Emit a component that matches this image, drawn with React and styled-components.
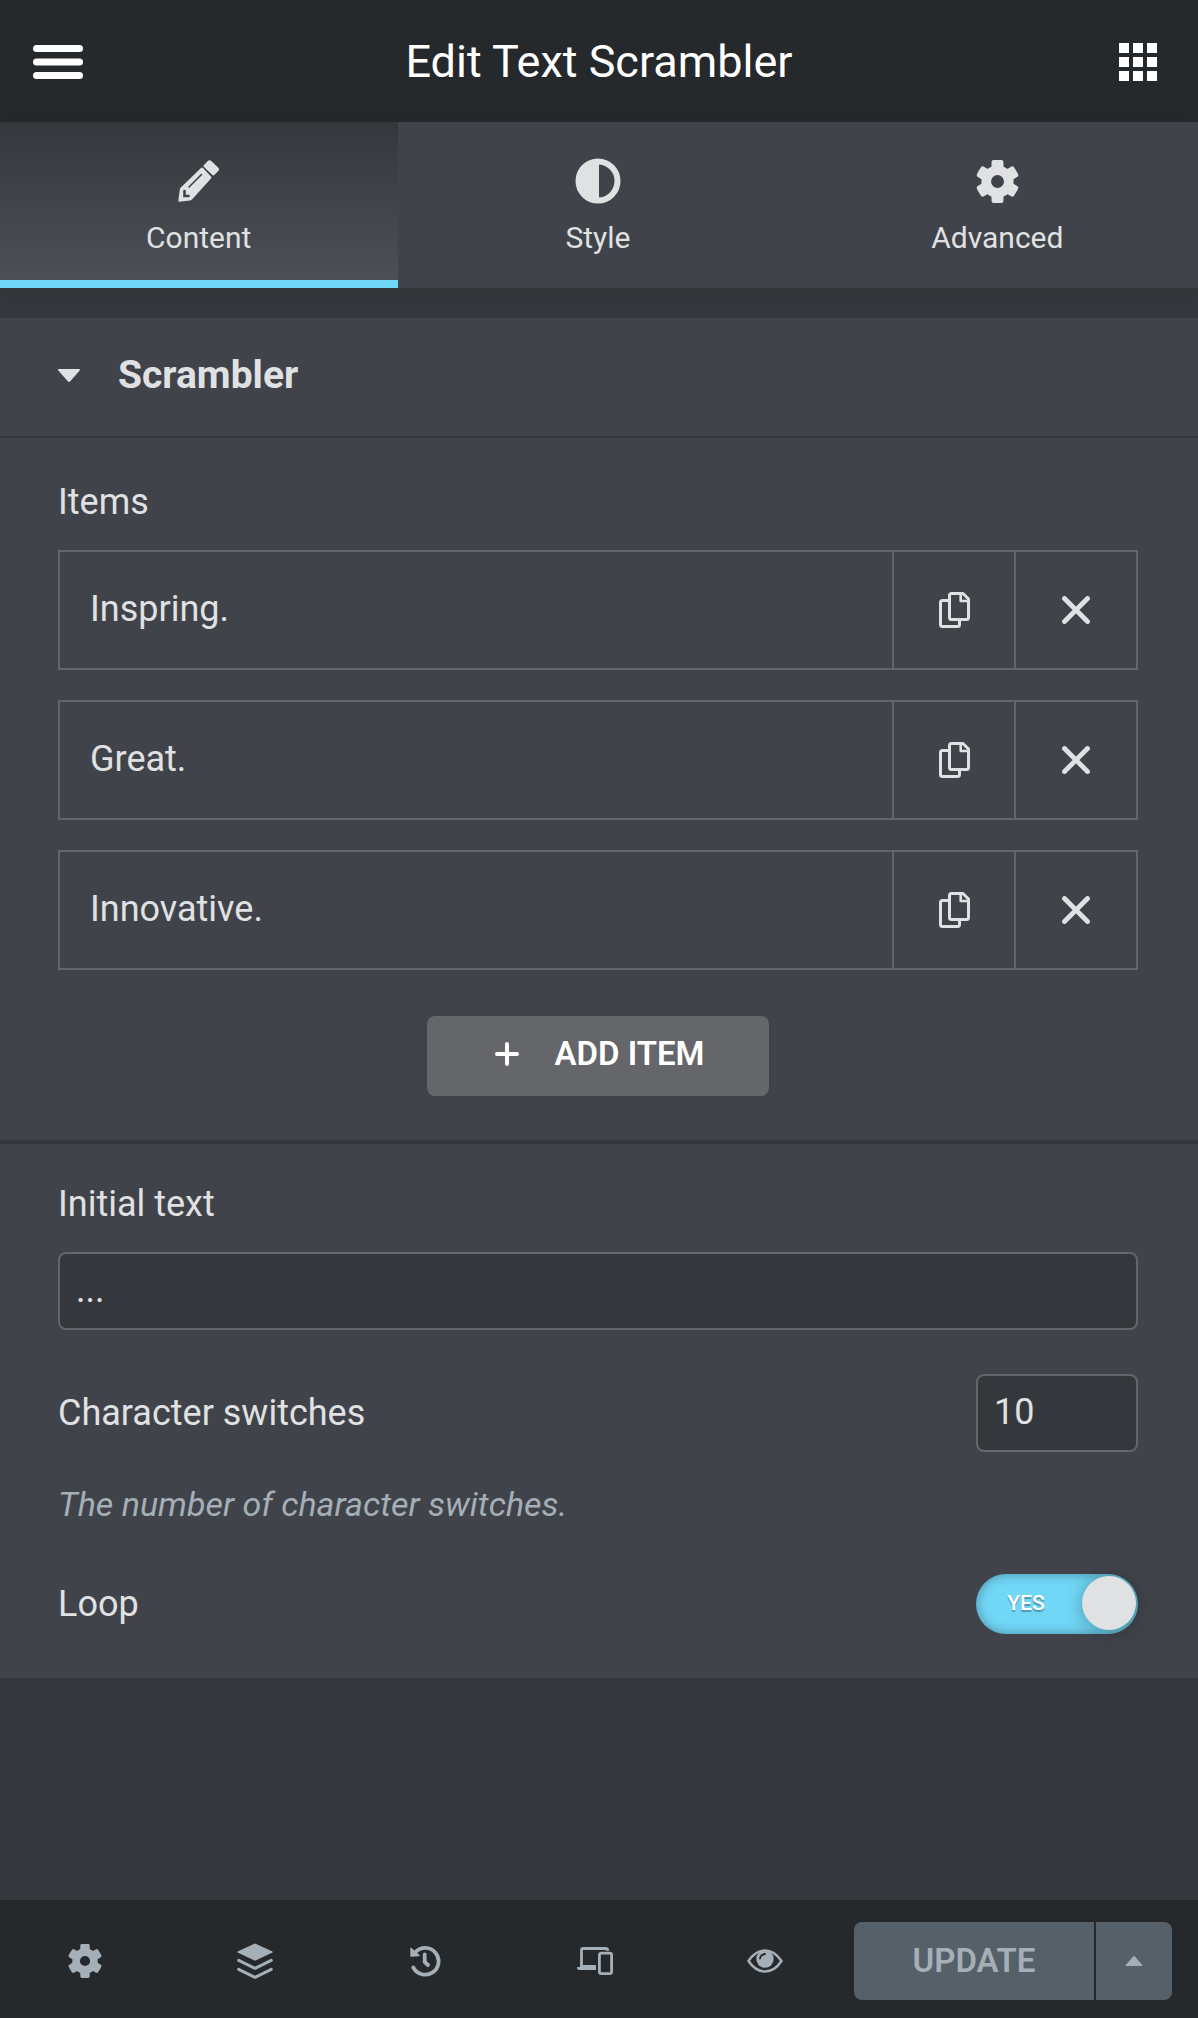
import React, { useState } from "react";
import styled, { createGlobalStyle, css } from "styled-components";

const color = {
  bar: "#26292c",
  panel: "#404349",
  page: "#34383c",
  line: "#64666a",
  text: "#e0e1e3",
  muted: "#a4afb7",
  accent: "#71d7f7",
  update: "#556068",
};

const GlobalStyle = createGlobalStyle`
  *, *::before, *::after { box-sizing: border-box; }
  body {
    margin: 0;
    background: ${color.page};
    color: ${color.text};
    font-family: Roboto, "Liberation Sans", sans-serif;
    font-size: 36px;
    line-height: 42px;
  }
  svg { display: block; flex: none; }
`;

const resetButton = css`
  margin: 0;
  padding: 0;
  border: 0;
  background: none;
  color: inherit;
  font: inherit;
  cursor: pointer;
  display: flex;
  align-items: center;
  justify-content: center;
`;

const Panel = styled.div`
  display: flex;
  flex-direction: column;
  min-height: 100vh;
`;

const Header = styled.header`
  display: grid;
  grid-template-columns: 1fr auto 1fr;
  align-items: center;
  height: 122px;
  padding: 2px 0 0;
  background: ${color.bar};
  color: #fff;
`;

const Title = styled.h1`
  margin: 0;
  font-size: 45px;
  line-height: 54px;
  font-weight: 400;
`;

const HeaderButton = styled.button`
  ${resetButton}
  justify-self: ${(p) => (p.$end ? "end" : "start")};
  padding: ${(p) => (p.$end ? "0 41px" : "0 33px")};
`;

const Tabs = styled.nav`
  display: grid;
  grid-template-columns: repeat(3, 1fr);
  height: 166px;
  background: ${color.panel};
  box-shadow: 0 2px 16px rgba(0, 0, 0, 0.1);
`;

const Tab = styled.button`
  ${resetButton}
  flex-direction: column;
  justify-content: flex-start;
  gap: 16px;
  margin-right: 1px;
  padding: 36px 1px 0 0;
  font-size: 30px;
  line-height: 36px;
  border-bottom: 8px solid transparent;
  ${(p) =>
    p.$active &&
    css`
      background: linear-gradient(${color.page}, #4d4f57) padding-box;
      border-bottom-color: ${color.accent};
    `}
`;

const TabIcon = styled.span`
  display: flex;
  align-items: center;
  justify-content: center;
  height: 46px;
`;

const Section = styled.section`
  margin-top: 30px;
  background: ${color.panel};
`;

const SectionToggle = styled.button`
  ${resetButton}
  justify-content: flex-start;
  gap: 38px;
  width: 100%;
  height: 120px;
  padding: 0 58px 4px;
  border-bottom: 2px solid ${color.page};
  font-size: 39px;
  font-weight: 700;
`;

const Group = styled.div`
  display: flex;
  flex-direction: column;
  padding: 43px 60px 44px 58px;

  & + & {
    padding-top: 39px;
    border-top: 4px solid ${color.page};
  }
`;

const Label = styled.label`
  font-size: 36px;
`;

const StackedLabel = styled(Label)`
  margin-bottom: 27px;
`;

const ItemList = styled.ul`
  display: flex;
  flex-direction: column;
  gap: 30px;
  margin: 0 0 46px;
  padding: 0;
  list-style: none;
`;

const Item = styled.li`
  display: flex;
  height: 120px;
  border: 2px solid ${color.line};
`;

const ItemTitle = styled.button`
  ${resetButton}
  flex: 1;
  justify-content: flex-start;
  padding: 0 30px 2px;
`;

const ItemTool = styled.button`
  ${resetButton}
  width: 122px;
  border-left: 2px solid ${color.line};
`;

const AddButton = styled.button`
  ${resetButton}
  align-self: center;
  gap: 35px;
  height: 80px;
  padding: 0 64px 4px 68px;
  border-radius: 8px;
  background: ${color.line};
  color: #fff;
  font-size: 33px;
  font-weight: 600;
  text-transform: uppercase;
`;

const Field = styled.input`
  width: ${(p) => (p.$small ? "162px" : "100%")};
  height: 78px;
  margin: 0;
  padding: 0 16px 2px;
  border: 2px solid ${color.line};
  border-radius: 8px;
  outline: 0;
  background: ${color.page};
  color: ${color.text};
  font: inherit;
  appearance: textfield;

  &::-webkit-inner-spin-button {
    appearance: none;
    margin: 0;
  }
`;

const Row = styled.div`
  display: flex;
  align-items: center;
  justify-content: space-between;
  margin-top: ${(p) => p.$gap}px;
`;

const Description = styled.p`
  margin: 32px 0 0;
  color: ${color.muted};
  font-size: 34px;
  line-height: 40px;
  font-style: italic;
`;

const Switch = styled.span`
  position: relative;
  display: flex;
  align-items: center;
  justify-content: ${(p) => (p.$on ? "flex-end" : "flex-start")};
  width: 162px;
  height: 60px;
  padding: 0 2px 2px;
  border-radius: 30px;
  background: ${(p) => (p.$on ? color.accent : color.line)};
  box-shadow: inset 0 0 12px rgba(0, 0, 0, 0.35);
`;

const SwitchInput = styled.input`
  position: absolute;
  inset: 0;
  width: 100%;
  height: 100%;
  margin: 0;
  opacity: 0;
  cursor: pointer;
`;

const SwitchText = styled.span`
  flex: 1;
  padding-right: 8px;
  text-align: center;
  color: #fff;
  font-size: 21px;
  line-height: 26px;
  font-weight: 500;
  text-transform: uppercase;
  text-shadow: 0 2px 1px rgba(0, 0, 0, 0.3);
`;

const Knob = styled.span`
  width: 54px;
  height: 54px;
  border-radius: 50%;
  background: ${color.text};
  box-shadow: 0 2px 18px rgba(0, 0, 0, 0.3);
`;

const Footer = styled.footer`
  display: flex;
  align-items: center;
  height: 118px;
  margin-top: auto;
  padding: 4px 26px 0 0;
  background: ${color.bar};
  color: ${color.muted};
`;

const FooterTools = styled.div`
  flex: 1;
  display: grid;
  grid-template-columns: repeat(5, 1fr);
  padding-right: 4px;
`;

const FooterButton = styled.button`
  ${resetButton}
  height: 78px;
`;

const Publish = styled.div`
  display: flex;
  gap: 2px;
  height: 78px;
  border-radius: 8px;
  overflow: hidden;
`;

const PublishButton = styled.button`
  ${resetButton}
  width: ${(p) => (p.$menu ? "76px" : "240px")};
  background: ${color.update};
  font-size: 33px;
  font-weight: 600;
  text-transform: uppercase;
`;

const MenuIcon = () => (
  <svg width="50" height="34" viewBox="0 0 50 34" fill="currentColor">
    <rect width="50" height="7" rx="3.5" />
    <rect y="13.5" width="50" height="7" rx="3.5" />
    <rect y="27" width="50" height="7" rx="3.5" />
  </svg>
);

const AppsIcon = () => (
  <svg width="38" height="38" viewBox="0 0 38 38" fill="currentColor">
    {[0, 14, 28].map((y) =>
      [0, 14, 28].map((x) => <rect key={`${x}-${y}`} x={x} y={y} width="10" height="10" />)
    )}
  </svg>
);

const PencilIcon = () => (
  <svg width="42" height="42" viewBox="0 0 42 42">
    <mask id="pencil-cut">
      <rect width="42" height="42" fill="#fff" />
      <path d="M23.5 14.5L11 27" stroke="#000" strokeWidth="1.6" strokeLinecap="round" />
      <path d="M6.500 31V36H10.500" stroke="#000" strokeWidth="2.600" fill="none" strokeLinecap="round" />
    </mask>
    <path
      mask="url(#pencil-cut)"
      fill="currentColor"
      d="M23 8Q24 7 25 8L33 16.500Q34 17.500 33 18.500L14 39.500Q13 40.500 12 40.600L1.500 41.800Q0.200 41.800 0.300 40.500L1.800 29.500Q1.900 28.500 2.800 27.600Z"
    />
    <path fill="currentColor" d="M26 5L29.800 1Q31.500 -0.500 33.300 1L40.300 7.700Q41.800 9.300 40.300 11L36.300 15Q35.300 15.900 34.300 15L26 7Q25 6 26 5Z" />
  </svg>
);

const ContrastIcon = () => (
  <svg width="46" height="46" viewBox="0 0 46 46">
    <circle cx="23" cy="23" r="19.500" fill="none" stroke="currentColor" strokeWidth="6" />
    <path d="M24 4A19 19 0 0 0 24 42Z" fill="currentColor" />
  </svg>
);

const GearIcon = ({ size }) => (
  <svg width={size} height={size} viewBox="0 0 24 24" fill="currentColor">
    <circle cx="12" cy="12" r="6.300" fill="none" stroke="currentColor" strokeWidth="5.400" />
    {[0, 60, 120, 180, 240, 300].map((a) => (
      <path key={a} transform={`rotate(${a} 12 12)`} d="M8.600 5.500L8.700 1Q8.800 0.100 9.700 0.050Q12 -0.150 14.300 0.050Q15.200 0.100 15.300 1L15.400 5.500Z" />
    ))}
  </svg>
);

const CaretIcon = ({ width, up }) => (
  <svg width={width} height={Math.round(width * 0.58)} viewBox="0 0 22 13" fill="currentColor">
    <path transform={up ? "rotate(180 11 6.500)" : undefined} d="M1 0H21Q22.500 0.300 21.500 1.700L12.200 12.300Q11 13.500 9.800 12.300L0.500 1.700Q-0.500 0.300 1 0Z" />
  </svg>
);

const CopyIcon = () => (
  <svg width="31" height="36" viewBox="0 0 31 36" fill="none" stroke="currentColor" strokeWidth="3" strokeLinejoin="round">
    <path d="M10.500 3.500Q10.500 1.500 12.500 1.500H24L29.500 7V25.500Q29.500 27.500 27.500 27.500H12.500Q10.500 27.500 10.500 25.500Z" />
    <path d="M21.700 1.500V9H29.500" strokeWidth="2.600" />
    <path d="M10.500 8.500H3.500Q1.500 8.500 1.500 10.500V32.500Q1.500 34.500 3.500 34.500H18.500Q20.500 34.500 20.500 32.500V28" />
  </svg>
);

const CloseIcon = () => (
  <svg width="28" height="28" viewBox="0 0 28 28" stroke="currentColor" strokeWidth="4.800" strokeLinecap="round">
    <path d="M2.500 2.500L25.500 25.500M25.500 2.500L2.500 25.500" />
  </svg>
);

const PlusIcon = () => (
  <svg width="24" height="24" viewBox="0 0 24 24" stroke="currentColor" strokeWidth="4" strokeLinecap="round">
    <path d="M12 2V22M2 12H22" />
  </svg>
);

const LayersIcon = () => (
  <svg width="36" height="36" viewBox="0 0 36 36" fill="none" stroke="currentColor" strokeWidth="3" strokeLinecap="round" strokeLinejoin="round">
    <path d="M18 0.500L35 8.200Q36.500 9 35 9.800L18 17.700L1 9.800Q-0.500 9 1 8.200Z" fill="currentColor" stroke="none" />
    <path d="M1.700 17.300L18 25.300L34.300 17.300" />
    <path d="M1.700 26.300L18 34.300L34.300 26.300" />
  </svg>
);

const HistoryIcon = () => (
  <svg width="31" height="32" viewBox="0 0 31 32" fill="none" stroke="currentColor" strokeWidth="3.800" strokeLinecap="round">
    <path d="M3.300 22.500A13.400 13.400 0 1 0 5.500 7" />
    <path d="M0.300 3Q0.800 2.200 1.500 3L9.500 10Q10.200 11 9 11.300L1 11.700Q0.300 11.700 0.300 11Z" fill="currentColor" stroke="none" />
    <path d="M14.700 9.500V17L18 20" strokeLinejoin="round" />
  </svg>
);

const DevicesIcon = () => (
  <svg width="36" height="28" viewBox="0 0 36 28" fill="none" stroke="currentColor" strokeWidth="2.800">
    <path d="M4.500 19V3Q4.500 1.500 6 1.500H28.500Q30.500 1.500 31 3.700" />
    <path d="M3 18H19V23H2Q0 23 0 20H3Z" fill="currentColor" stroke="none" />
    <rect x="22.400" y="6.200" width="12.200" height="20.400" rx="1.800" />
  </svg>
);

const EyeIcon = () => (
  <svg width="36" height="24" viewBox="0 0 36 24">
    <path d="M1.500 12Q8.500 1.500 18 1.500T34.500 12Q27.500 22.500 18 22.500T1.500 12Z" fill="none" stroke="currentColor" strokeWidth="2.600" strokeLinejoin="round" />
    <circle cx="18" cy="10" r="8.700" fill="currentColor" />
    <path d="M13 9.500Q13.500 5.500 18 5" fill="none" stroke={color.bar} strokeWidth="1.800" strokeLinecap="round" />
  </svg>
);

const tabs = [
  { name: "Content", icon: <PencilIcon /> },
  { name: "Style", icon: <ContrastIcon /> },
  { name: "Advanced", icon: <GearIcon size={43} /> },
];

const footerTools = [
  { name: "Settings", icon: <GearIcon size={34} /> },
  { name: "Navigator", icon: <LayersIcon /> },
  { name: "History", icon: <HistoryIcon /> },
  { name: "Responsive Mode", icon: <DevicesIcon /> },
  { name: "Preview Changes", icon: <EyeIcon /> },
];

const items = ["Inspring.", "Great.", "Innovative."];

export default function App() {
  const [active, setActive] = useState("Content");
  const [loop, setLoop] = useState(true);

  return (
    <Panel>
      <GlobalStyle />
      <Header>
        <HeaderButton aria-label="Menu"><MenuIcon /></HeaderButton>
        <Title>Edit Text Scrambler</Title>
        <HeaderButton $end aria-label="Widgets"><AppsIcon /></HeaderButton>
      </Header>
      <Tabs>
        {tabs.map((tab) => (
          <Tab key={tab.name} $active={tab.name === active} onClick={() => setActive(tab.name)}>
            <TabIcon>{tab.icon}</TabIcon>
            {tab.name}
          </Tab>
        ))}
      </Tabs>
      <Section>
        <SectionToggle aria-expanded="true">
          <CaretIcon width={22} />
          Scrambler
        </SectionToggle>
        <Group>
          <StackedLabel as="span" id="items-label">Items</StackedLabel>
          <ItemList aria-labelledby="items-label">
            {items.map((item) => (
              <Item key={item}>
                <ItemTitle>{item}</ItemTitle>
                <ItemTool aria-label="Duplicate"><CopyIcon /></ItemTool>
                <ItemTool aria-label="Remove"><CloseIcon /></ItemTool>
              </Item>
            ))}
          </ItemList>
          <AddButton><PlusIcon />Add Item</AddButton>
        </Group>
        <Group>
          <StackedLabel htmlFor="initial-text">Initial text</StackedLabel>
          <Field id="initial-text" type="text" defaultValue="..." />
          <Row $gap={44}>
            <Label htmlFor="switches">Character switches</Label>
            <Field id="switches" type="number" defaultValue="10" $small />
          </Row>
          <Description>The number of character switches.</Description>
          <Row $gap={50}>
            <Label htmlFor="loop">Loop</Label>
            <Switch $on={loop}>
              <SwitchText>{loop ? "Yes" : "No"}</SwitchText>
              <Knob />
              <SwitchInput id="loop" type="checkbox" checked={loop} onChange={(e) => setLoop(e.target.checked)} />
            </Switch>
          </Row>
        </Group>
      </Section>
      <Footer>
        <FooterTools>
          {footerTools.map((tool) => (
            <FooterButton key={tool.name} aria-label={tool.name}>{tool.icon}</FooterButton>
          ))}
        </FooterTools>
        <Publish>
          <PublishButton>Update</PublishButton>
          <PublishButton $menu aria-label="Save options"><CaretIcon width={18} up /></PublishButton>
        </Publish>
      </Footer>
    </Panel>
  );
}
